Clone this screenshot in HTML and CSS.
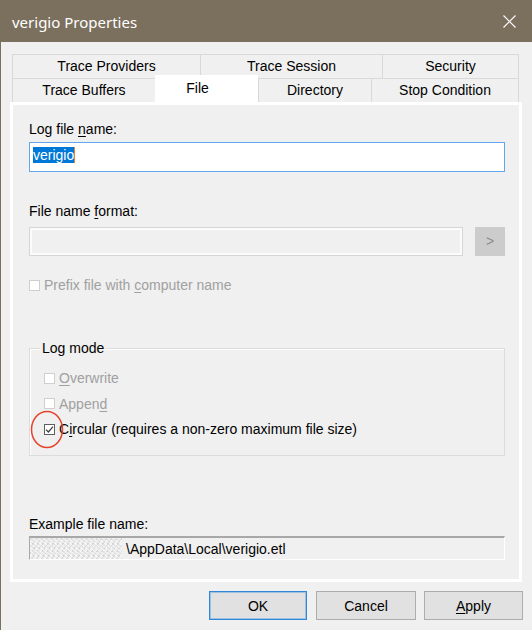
FILE: index.html
```html
<!DOCTYPE html>
<html>
<head>
<meta charset="utf-8">
<title>verigio Properties</title>
<link rel="stylesheet" href="styles.css">
</head>
<body>
<div class="window">
  <div class="titlebar">
    <span class="title">verigio Properties</span>
    <svg class="close" width="13" height="13" viewBox="0 0 13 13"><path d="M0.5 0.5 L12.5 12.5 M12.5 0.5 L0.5 12.5" stroke="#ffffff" stroke-width="1.2" fill="none"/></svg>
  </div>
  <div class="client">
    <div class="tabs">
      <div class="tabrow row1">
        <div class="tab">Trace Providers</div>
        <div class="tab">Trace Session</div>
        <div class="tab">Security</div>
      </div>
      <div class="tabrow row2">
        <div class="tab">Trace Buffers</div>
        <div class="tab active">File</div>
        <div class="tab">Directory</div>
        <div class="tab">Stop Condition</div>
      </div>
    </div>
    <div class="panel">
      <div class="label">Log file <u>n</u>ame:</div>
      <div class="edit focused"><span class="sel">verigio</span><span class="caret"></span></div>
      <div class="label label-format">File name <u>f</u>ormat:</div>
      <div class="format-row">
        <div class="edit disabled"></div>
        <div class="browse">&gt;</div>
      </div>
      <div class="check disabled prefix"><span class="box"></span><span>Prefix file with <u>c</u>omputer name</span></div>
      <div class="group">
        <div class="group-title">Log mode</div>
        <div class="check disabled first"><span class="box"></span><span><u>O</u>verwrite</span></div>
        <div class="check disabled"><span class="box"></span><span>Appen<u>d</u></span></div>
        <div class="check circular">
          <span class="box checked"><svg width="9" height="9" viewBox="0 0 9 9"><path d="M1 4.6 L3.4 7 L8 1.6" stroke="#3a3a3a" stroke-width="1.2" fill="none"/></svg></span>
          <span>C<u>i</u>rcular (requires a non-zero maximum file size)</span>
          <svg class="highlight" width="34" height="39" viewBox="0 0 34 39"><ellipse cx="17" cy="19.5" rx="15.5" ry="18" stroke="#e6432b" stroke-width="1.5" fill="none"/></svg>
        </div>
      </div>
      <div class="label label-example">Example file name:</div>
      <div class="example"><span class="redacted"></span><span class="path">\AppData\Local\verigio.etl</span></div>
    </div>
    <div class="buttons">
      <div class="btn default ok">OK</div>
      <div class="btn cancel">Cancel</div>
      <div class="btn apply"><span><u>A</u>pply</span></div>
    </div>
  </div>
</div>
</body>
</html>
```
FILE: styles.css
```css
* { box-sizing: border-box; }
html, body { margin: 0; padding: 0; }
body {
  width: 532px;
  height: 630px;
  overflow: hidden;
  background: #f0f0f0;
  font-family: "Liberation Sans", Arial, sans-serif;
  font-size: 14px;
  line-height: 16px;
  color: #000;
}
u { text-decoration: underline; text-underline-offset: 2px; text-decoration-thickness: 1px; }

.window {
  height: 630px;
  border-left: 1px solid #7b6f5e;
  background: #f0f0f0;
}

.titlebar {
  height: 42px;
  background: #7b6f5e;
  display: flex;
  align-items: center;
  justify-content: space-between;
  padding: 0 16px 0 11px;
  color: #fff;
}
.title {
  font-family: "Noto Sans", "Open Sans", sans-serif;
  font-size: 15px;
  line-height: 20px;
  margin-top: 1px;
}
.close { display: block; margin-top: 1px; }

.client { padding: 12px 10px 0 9px; }

.tabs { margin: 0 3px 0 2px; }
.tabrow { display: grid; height: 24px; }
.row1 { grid-template-columns: 188px 182px 137px; }
.row2 { grid-template-columns: 143px 103px 113px 148px; }
.tab {
  border-top: 1px solid #d9d9d9;
  border-left: 1px solid #d9d9d9;
  text-align: center;
  line-height: 23px;
  white-space: nowrap;
}
.tab:last-child { border-right: 1px solid #d9d9d9; }
.tab.active {
  background: #fff;
  border: none;
  margin-top: -3px;
  margin-bottom: -3px;
  line-height: 26px;
  padding-right: 18px;
  position: relative;
  z-index: 1;
}

.panel {
  height: 480px;
  border: 3px solid #fff;
  padding: 16px 14px 0 16px;
}

.label { line-height: 16px; }
.label-format { margin-top: 31px; }
.label-example { margin-top: 60px; }

.edit.focused {
  margin-top: 5px;
  height: 30px;
  border: 1px solid #63a6e9;
  background: #fff;
  padding: 4px 3px 0;
  display: flex;
  align-items: flex-start;
}
.sel {
  background: #0078d7;
  color: #fff;
  line-height: 16px;
}
.caret {
  width: 1px;
  height: 16px;
  background: #e5822f;
}

.format-row {
  margin-top: 8px;
  display: flex;
  height: 29px;
  gap: 12px;
}
.edit.disabled {
  flex: 0 0 434px;
  border: 1px solid #d6d6d6;
  box-shadow: inset 0 0 0 2px #fbfbfb;
  background: #f0f0f0;
}
.browse {
  width: 30px;
  background: #cccccc;
  color: #8c8c8c;
  text-align: center;
  line-height: 29px;
}

.check {
  display: flex;
  align-items: center;
  height: 16px;
  white-space: nowrap;
}
.check.disabled { color: #a0a0a0; }
.box {
  flex: 0 0 11px;
  width: 11px;
  height: 11px;
  border: 1px solid #cfcfcf;
  background: #fff;
  margin-right: 4px;
  display: flex;
  align-items: center;
  justify-content: center;
}
.box.checked { border-color: #5e5e5e; }
.box svg { display: block; }
.prefix { margin-top: 21px; }

.group {
  margin-top: 55px;
  border: 1px solid #dcdcdc;
  box-shadow: inset 1px 1px 0 #fff;
  padding: 0 16px 18px 10px;
}
.group-title {
  display: table;
  margin-top: -9px;
  padding: 0 2px;
  background: #f0f0f0;
  line-height: 16px;
}
.group .check { margin-left: 4px; margin-top: 9.5px; }
.group .check.first { margin-top: 14px; }
.circular { position: relative; }
.highlight {
  position: absolute;
  left: -14px;
  top: -11px;
}

.example {
  margin-top: 4px;
  height: 24px;
  display: flex;
  align-items: center;
  border-style: solid;
  border-width: 2px 1px 1px 1px;
  border-color: #a8a8a8 #fff #fff #a8a8a8;
  background: #f0f0f0;
}
.redacted {
  width: 92px;
  height: 100%;
  margin-right: 4px;
  background:
    repeating-linear-gradient(37deg, rgba(255,255,255,0.55) 0 1px, transparent 1px 3px),
    repeating-linear-gradient(-53deg, rgba(190,190,190,0.45) 0 1px, transparent 1px 4px),
    repeating-linear-gradient(90deg, rgba(255,255,255,0.35) 0 2px, transparent 2px 5px),
    #e6e6e6;
}

.buttons {
  display: flex;
  justify-content: flex-end;
  margin-top: 9px;
  margin-right: -1px;
}
.btn {
  height: 29px;
  border: 1px solid #adadad;
  background: #e1e1e1;
  display: flex;
  align-items: center;
  justify-content: center;
}
.btn.ok { width: 98px; margin-right: 9px; }
.btn.cancel { width: 100px; margin-right: 8px; }
.btn.apply { width: 99px; }
.btn.default {
  border-color: #2f87d9;
  box-shadow: inset 0 0 0 1px rgba(0, 120, 215, 0.3);
}
```
